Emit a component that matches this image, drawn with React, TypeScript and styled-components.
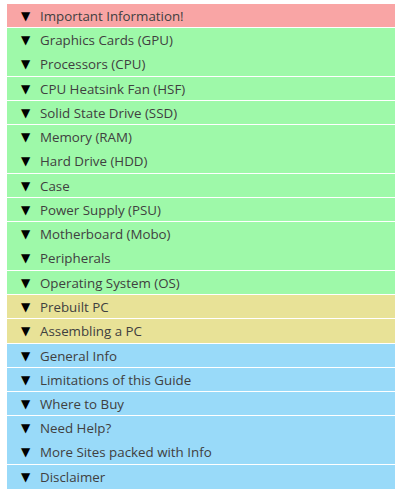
import React from "react";
import styled, { createGlobalStyle } from "styled-components";

const Global = createGlobalStyle`
  html, body { margin: 0; padding: 0; background: #ffffff; overflow: hidden; }
  body { font-family: "Open Sans", "Liberation Sans", sans-serif; }
`;

const Panel = styled.div`
  display: flex;
  flex-direction: column;
  padding: 4px 0 0 7px;
  width: 400px;
`;

type Tone = "red" | "green" | "yellow" | "blue";
const tones: Record<Tone, string> = {
  red: "#f9a5a5",
  green: "#9ef9a9",
  yellow: "#e8e297",
  blue: "#99daf9",
};

const Row = styled.div<{ $tone: Tone; $tall: boolean; $gap: boolean }>`
  display: flex;
  align-items: center;
  flex: none;
  height: ${(p) => (p.$tall ? 24 : 23)}px;
  margin-bottom: ${(p) => (p.$gap ? 1 : 0)}px;
  padding-left: 14px;
  background: ${(p) => tones[p.$tone]};
  color: #404040;
  font-size: 13.33px;
  white-space: nowrap;
`;

const Arrow = styled.span`
  display: inline-block;
  width: 19px;
  font-family: "DejaVu Sans", sans-serif;
  font-size: 12px;
  color: #000;
`;

// [label, tone, tall row, separator below]
const items: [string, Tone, boolean, boolean][] = [
  ["Important Information!", "red", false, true],
  ["Graphics Cards (GPU)", "green", true, false],
  ["Processors (CPU)", "green", true, true],
  ["CPU Heatsink Fan (HSF)", "green", false, true],
  ["Solid State Drive (SSD)", "green", false, true],
  ["Memory (RAM)", "green", true, false],
  ["Hard Drive (HDD)", "green", true, true],
  ["Case", "green", false, true],
  ["Power Supply (PSU)", "green", false, true],
  ["Motherboard (Mobo)", "green", true, false],
  ["Peripherals", "green", true, true],
  ["Operating System (OS)", "green", false, true],
  ["Prebuilt PC", "yellow", false, true],
  ["Assembling a PC", "yellow", true, true],
  ["General Info", "blue", false, true],
  ["Limitations of this Guide", "blue", false, true],
  ["Where to Buy", "blue", false, true],
  ["Need Help?", "blue", true, false],
  ["More Sites packed with Info", "blue", true, true],
  ["Disclaimer", "blue", true, true],
];

export default function App() {
  return (
    <>
      <Global />
      <Panel>
        {items.map(([label, tone, tall, gap]) => (
          <Row key={label} $tone={tone} $tall={tall} $gap={gap}>
            <Arrow>▼</Arrow>
            {label}
          </Row>
        ))}
      </Panel>
    </>
  );
}
